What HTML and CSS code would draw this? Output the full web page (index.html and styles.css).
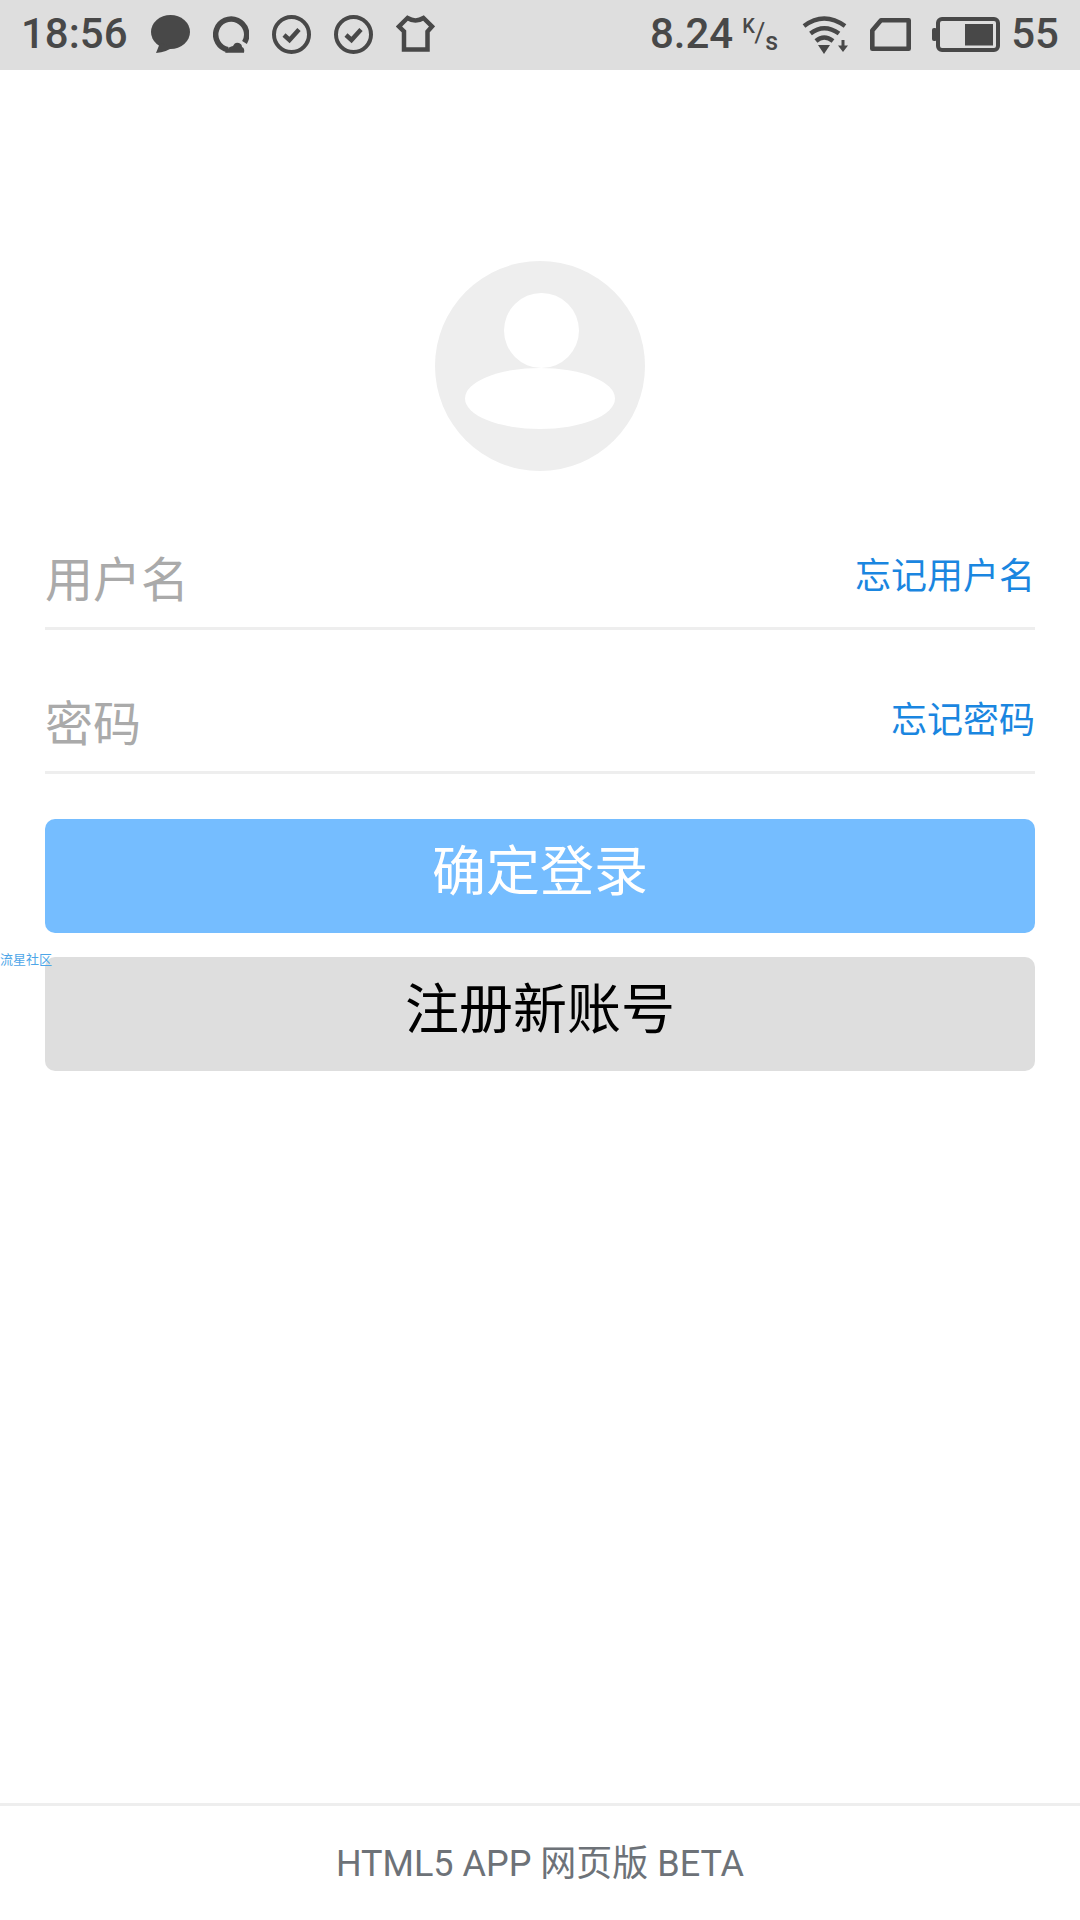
FILE: index.html
```html
<!DOCTYPE html>
<html lang="zh-CN">
<head>
<meta charset="utf-8">
<title>登录</title>
<link rel="stylesheet" href="styles.css">
</head>
<body>
<div class="page">
  <header class="status">
    <div class="status-left">
      <span class="time">18:56</span>
      <svg class="ic ic-chat" viewBox="0 0 39 38"><ellipse cx="19.500" cy="17" rx="19.500" ry="17"/><path d="M9 28 L5 38 Q16 37 22 32 Z"/></svg>
      <svg class="ic ic-q" viewBox="0 0 36 37"><path class="ln" d="M31.500 26.500 A15.500 15.500 0 1 0 15 33.700" stroke-width="5.500"/><path d="M12 36.800 L16 31.500 Q18.500 30 20 30 Q22 25.500 26 27 Q29 28 29 31 Q32 32 31 36.800 Z"/></svg>
      <svg class="ic ic-check" viewBox="0 0 39 39"><circle class="ln" cx="19.500" cy="19.500" r="17.500" stroke-width="4"/><path class="ln" d="M12 20 L17.500 25 L27 14.500" stroke-width="4.500"/></svg>
      <svg class="ic ic-check" viewBox="0 0 39 39"><circle class="ln" cx="19.500" cy="19.500" r="17.500" stroke-width="4"/><path class="ln" d="M12 20 L17.500 25 L27 14.500" stroke-width="4.500"/></svg>
      <svg class="ic ic-shirt" viewBox="0 0 39 38"><path class="ln" d="M11.500 3 Q19.500 8 27.500 3 L36 11.500 L31.500 16.500 V34.500 H8 V16.500 L3 11.500 Z" stroke-width="4.500"/></svg>
    </div>
    <div class="status-right">
      <span class="speed">8.24</span>
      <span class="unit"><span class="unit-k">K</span><span class="unit-slash">/</span><span class="unit-s">s</span></span>
      <svg class="ic ic-wifi" viewBox="0 0 46 39"><path class="ln" d="M2 11 Q22 -4 43 11" stroke-width="4.500"/><path class="ln" d="M8.500 18.500 Q22 8 37 18.500" stroke-width="4.500"/><path class="ln" d="M14 26 Q22 19 31 26" stroke-width="4.500"/><path d="M16 30 L28 30 L22 39 Z"/><path d="M39.500 25 H42.500 V30.500 H46 L41 37 L36 30.500 H39.500 Z"/></svg>
      <svg class="ic ic-sim" viewBox="0 0 41 33"><path class="ln" d="M11 2.300 H38.700 V30.700 H2.300 V12.500 Z" stroke-width="4.600" stroke-linejoin="round"/></svg>
      <svg class="ic ic-batt" viewBox="0 0 68 35"><rect x="0" y="11" width="5" height="13" rx="2"/><rect class="ln" x="6" y="2" width="60" height="31" rx="4" stroke-width="4"/><rect x="33" y="7" width="28" height="21.500"/></svg>
      <span class="level">55</span>
    </div>
  </header>

  <main class="login">
    <div class="avatar">
      <span class="avatar-head"></span>
      <span class="avatar-body"></span>
    </div>
    <div class="field">
      <input class="field-input" type="text" placeholder="用户名">
      <a class="field-link">忘记用户名</a>
    </div>
    <div class="field">
      <input class="field-input" type="password" placeholder="密码">
      <a class="field-link">忘记密码</a>
    </div>
    <button class="btn btn-primary" type="button">确定登录</button>
    <button class="btn btn-secondary" type="button">注册新账号</button>
  </main>

  <span class="watermark">流星社区</span>

  <footer class="footer">HTML5 APP 网页版 BETA</footer>
</div>
</body>
</html>
```

FILE: styles.css
```css
* { box-sizing: border-box; }
html, body { margin: 0; padding: 0; background: #fff; }
body { font-family: "Noto Sans CJK SC", "Noto Sans", sans-serif; }

.page {
  position: relative;
  width: 1080px;
  height: 1920px;
  display: flex;
  flex-direction: column;
  overflow: hidden;
}

.status {
  height: 70px;
  flex: none;
  background: #dedede;
  color: #484848;
  display: flex;
  justify-content: space-between;
  align-items: center;
  padding: 0 21px;
  font-family: Roboto, sans-serif;
  font-weight: 500;
}
.status-left, .status-right { display: flex; align-items: center; }
.status-left { gap: 23px; }
.time, .speed, .level { font-size: 42px; line-height: 68px; margin-top: -2px; }
.ic { display: block; flex: none; fill: #484848; margin-top: -2px; }
.ln { fill: none; stroke: #484848; }
.ic-chat { width: 39px; height: 38px; }
.ic-q { width: 36px; height: 37px; }
.ic-check { width: 39px; height: 39px; }
.ic-shirt { width: 39px; height: 38px; }
.unit { position: relative; width: 36px; height: 69px; margin-left: 9px; }
.unit-k, .unit-slash, .unit-s { position: absolute; line-height: 1; }
.unit-k { left: 0; top: 15px; font-size: 20px; }
.unit-slash { left: 12px; top: 19px; font-size: 27px; font-weight: 400; }
.unit-s { left: 23px; top: 28px; font-size: 25px; }
.ic-wifi { width: 46px; height: 39px; margin-left: 24px; }
.ic-sim { width: 41px; height: 33px; margin-left: 22px; }
.ic-batt { width: 68px; height: 35px; margin-left: 21px; }
.level { margin-left: 11px; }

.login { padding: 191px 45px 0; display: flex; flex-direction: column; }
.avatar {
  position: relative;
  width: 210px;
  height: 210px;
  flex: none;
  align-self: center;
  border-radius: 50%;
  background: #eeeeee;
  margin-bottom: 15px;
}
.avatar-head {
  position: absolute;
  left: 69px;
  top: 32px;
  width: 75px;
  height: 75px;
  border-radius: 50%;
  background: #fff;
}
.avatar-body {
  position: absolute;
  left: 30px;
  top: 107px;
  width: 150px;
  height: 61px;
  border-radius: 50%;
  background: #fff;
}

.field {
  height: 144px;
  display: flex;
  align-items: flex-end;
  border-bottom: 3px solid #eeeeee;
}
.field-input {
  flex: 1;
  min-width: 0;
  border: 0;
  outline: 0;
  padding: 0;
  background: transparent;
  font-family: inherit;
  font-size: 48px;
  height: 70px;
  line-height: 70px;
  margin-bottom: 16px;
}
.field-input::placeholder { color: #aaaaaa; opacity: 1; }
.field-link {
  color: #1a86e0;
  font-size: 36px;
  line-height: 50px;
  margin-bottom: 29px;
}

.btn {
  display: block;
  width: 100%;
  height: 114px;
  border: 0;
  border-radius: 10px;
  font-family: inherit;
  font-size: 54px;
  padding: 0 0 17px;
  flex: none;
}
.btn-primary { margin-top: 45px; background: #75bdff; color: #fff; }
.btn-secondary { margin-top: 24px; background: #dedede; color: #000; }

.watermark {
  position: absolute;
  left: 0;
  top: 950px;
  font-size: 13px;
  line-height: 18px;
  color: #4ea6e8;
}

.footer {
  margin-top: auto;
  height: 117px;
  flex: none;
  border-top: 3px solid #eeeeee;
  display: flex;
  align-items: center;
  justify-content: center;
  color: #6d7278;
  font-size: 36px;
  padding-bottom: 6px;
  font-family: Roboto, "Noto Sans CJK SC", sans-serif;
}
```
